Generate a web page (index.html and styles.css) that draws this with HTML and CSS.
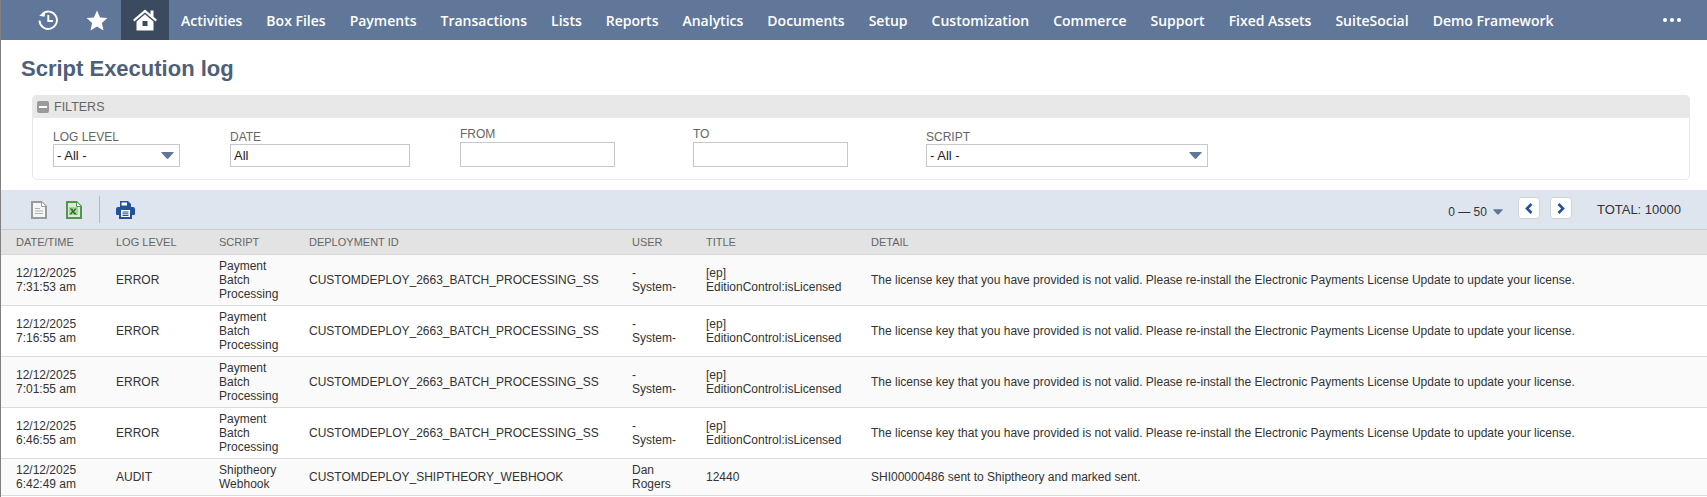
FILE: index.html
```html
<!DOCTYPE html>
<html lang="en">
<head>
<meta charset="utf-8">
<title>Script Execution log</title>
<link rel="stylesheet" href="styles.css">
</head>
<body>
<div class="page">
  <nav class="nav">
    <a class="nav-icon nav-first" aria-label="Recent">
      <svg width="20" height="20" viewBox="0 0 20 20"><path d="M4.2 3.9A8.7 8.7 0 1 1 1.5 10.5" fill="none" stroke="#fff" stroke-width="1.9"/><path d="M7 0.3V6.4H1.6Z" fill="#fff" transform="rotate(12 5 4)"/><path d="M10.3 5V11H15" fill="none" stroke="#fff" stroke-width="1.9"/></svg>
    </a>
    <a class="nav-icon nav-star" aria-label="Favorites">
      <svg width="22" height="21" viewBox="0 0 22 21"><path d="M11 0.5L14.1 7.4L21.4 8.1L15.9 13L17.5 20.4L11 16.6L4.5 20.4L6.1 13L0.6 8.1L7.9 7.4Z" fill="#fff"/></svg>
    </a>
    <a class="nav-icon nav-home" aria-label="Home">
      <svg width="24" height="22" viewBox="0 0 24 22"><path d="M12 0.5L17.5 5.2V1.5H20.5V7.8L24 10.8L22.6 12.4L12 3.4L1.4 12.4L0 10.8Z" fill="#fff"/><path fill-rule="evenodd" d="M12 5.2L20.5 12.4V21.5H3.5V12.4ZM9.5 12V17H14.5V12Z" fill="#fff"/></svg>
    </a>
    <a class="nav-link">Activities</a>
    <a class="nav-link">Box Files</a>
    <a class="nav-link">Payments</a>
    <a class="nav-link">Transactions</a>
    <a class="nav-link">Lists</a>
    <a class="nav-link">Reports</a>
    <a class="nav-link">Analytics</a>
    <a class="nav-link">Documents</a>
    <a class="nav-link">Setup</a>
    <a class="nav-link">Customization</a>
    <a class="nav-link">Commerce</a>
    <a class="nav-link">Support</a>
    <a class="nav-link">Fixed Assets</a>
    <a class="nav-link">SuiteSocial</a>
    <a class="nav-link">Demo Framework</a>
    <span class="nav-more" aria-label="More"><i></i><i></i><i></i></span>
  </nav>

  <h1 class="title">Script Execution log</h1>

  <section class="filters">
    <div class="filters-head">
      <span class="minus"></span>
      <span class="filters-name">FILTERS</span>
    </div>
    <div class="filters-body">
      <div class="field">
        <label class="field-label">LOG LEVEL</label>
        <div class="select select-level"><span>- All -</span>
          <svg class="caret" width="13" height="7" viewBox="0 0 13 7"><path d="M0.8 0H12.2Q13 0 12.6 0.8L7.3 6.6Q6.5 7.2 5.7 6.6L0.4 0.8Q0 0 0.8 0Z" fill="#607799"/></svg>
        </div>
      </div>
      <div class="field">
        <label class="field-label">DATE</label>
        <input class="input input-date" value="All">
      </div>
      <div class="field">
        <label class="field-label">FROM</label>
        <input class="input input-range">
      </div>
      <div class="field">
        <label class="field-label">TO</label>
        <input class="input input-range">
      </div>
      <div class="field">
        <label class="field-label">SCRIPT</label>
        <div class="select select-script"><span>- All -</span>
          <svg class="caret" width="13" height="7" viewBox="0 0 13 7"><path d="M0.8 0H12.2Q13 0 12.6 0.8L7.3 6.6Q6.5 7.2 5.7 6.6L0.4 0.8Q0 0 0.8 0Z" fill="#607799"/></svg>
        </div>
      </div>
    </div>
  </section>

  <div class="toolbar">
    <svg class="tool tool-doc" width="16" height="18" viewBox="0 0 16 18"><path d="M1 1H10.5L15 5.5V17H1Z" fill="#f4f5f7" stroke="#9a9a9a" stroke-width="2"/><path d="M10.5 1V5.5H15" fill="#fff" stroke="#9a9a9a"/><path d="M4 7.5H9M4 10H12M4 12.5H12" stroke="#b0b0b0"/></svg>
    <svg class="tool tool-xls" width="16" height="18" viewBox="0 0 16 18"><path d="M1 1H10.5L15 5.5V17H1Z" fill="#dcebd6" stroke="#4f9650" stroke-width="2"/><path d="M10.5 1V5.5H15" fill="#fff" stroke="#4f9650"/><path d="M3 6H12V14H3Z" fill="#a9d29f"/><path d="M4 6.5L11 13.5H8.6L6.8 11.4L5.2 13.5H3.6L6 10.2L3.8 7.5H6.2L7.6 9.2L9 7.5H10.6L8.4 10.4" fill="#256b1f"/></svg>
    <span class="tool-sep"></span>
    <svg class="tool tool-print" width="19" height="18" viewBox="0 0 19 18"><path d="M4 0H12L15 3V6H4Z" fill="#23529b"/><path d="M5.5 1.5H11V4.5H5.5Z" fill="#fff"/><path d="M2 6H17Q19 6 19 8V13Q19 14 18 14H16V18H3V14H1Q0 14 0 13V8Q0 6 2 6Z" fill="#23529b"/><path d="M5 9H14V16H5Z" fill="#fff"/><path d="M6.5 11H12.5M6.5 12.8H12.5M6.5 14.5H12.5" stroke="#23529b"/></svg>
    <div class="pager">
      <span class="range">0 — 50</span>
      <svg class="range-caret" width="10" height="6" viewBox="0 0 13 7"><path d="M0.8 0H12.2Q13 0 12.6 0.8L7.3 6.6Q6.5 7.2 5.7 6.6L0.4 0.8Q0 0 0.8 0Z" fill="#607799"/></svg>
      <button class="page-btn page-prev" aria-label="Previous"><svg width="8" height="11" viewBox="0 0 8 11"><path d="M6.5 1L2 5.5L6.5 10" fill="none" stroke="#23529b" stroke-width="2.6"/></svg></button>
      <button class="page-btn page-next" aria-label="Next"><svg width="8" height="11" viewBox="0 0 8 11"><path d="M1.5 1L6 5.5L1.5 10" fill="none" stroke="#23529b" stroke-width="2.6"/></svg></button>
      <span class="total">TOTAL: 10000</span>
    </div>
  </div>

  <table class="log">
    <colgroup>
      <col class="c-date"><col class="c-level"><col class="c-script"><col class="c-dep"><col class="c-user"><col class="c-title"><col class="c-detail">
    </colgroup>
    <thead>
      <tr><th>DATE/TIME</th><th>LOG LEVEL</th><th>SCRIPT</th><th>DEPLOYMENT ID</th><th>USER</th><th>TITLE</th><th>DETAIL</th></tr>
    </thead>
    <tbody>
      <tr>
        <td>12/12/2025 7:31:53 am</td><td>ERROR</td><td>Payment Batch Processing</td><td>CUSTOMDEPLOY_2663_BATCH_PROCESSING_SS</td><td>-System-</td><td>[ep] EditionControl:isLicensed</td>
        <td>The license key that you have provided is not valid. Please re-install the Electronic Payments License Update to update your license.</td>
      </tr>
      <tr>
        <td>12/12/2025 7:16:55 am</td><td>ERROR</td><td>Payment Batch Processing</td><td>CUSTOMDEPLOY_2663_BATCH_PROCESSING_SS</td><td>-System-</td><td>[ep] EditionControl:isLicensed</td>
        <td>The license key that you have provided is not valid. Please re-install the Electronic Payments License Update to update your license.</td>
      </tr>
      <tr>
        <td>12/12/2025 7:01:55 am</td><td>ERROR</td><td>Payment Batch Processing</td><td>CUSTOMDEPLOY_2663_BATCH_PROCESSING_SS</td><td>-System-</td><td>[ep] EditionControl:isLicensed</td>
        <td>The license key that you have provided is not valid. Please re-install the Electronic Payments License Update to update your license.</td>
      </tr>
      <tr>
        <td>12/12/2025 6:46:55 am</td><td>ERROR</td><td>Payment Batch Processing</td><td>CUSTOMDEPLOY_2663_BATCH_PROCESSING_SS</td><td>-System-</td><td>[ep] EditionControl:isLicensed</td>
        <td>The license key that you have provided is not valid. Please re-install the Electronic Payments License Update to update your license.</td>
      </tr>
      <tr>
        <td>12/12/2025 6:42:49 am</td><td>AUDIT</td><td>Shiptheory Webhook</td><td>CUSTOMDEPLOY_SHIPTHEORY_WEBHOOK</td><td>Dan Rogers</td><td>12440</td>
        <td>SHI00000486 sent to Shiptheory and marked sent.</td>
      </tr>
    </tbody>
  </table>
</div>
</body>
</html>
```
FILE: styles.css
```css
* { box-sizing: border-box; }
html, body { margin: 0; padding: 0; background: #fff; }
body { font-family: "Liberation Sans", Arial, sans-serif; font-size: 12px; color: #333; overflow: hidden; }
.page { width: 1707px; height: 497px; border-left: 1px solid #808080; overflow: hidden; }

.nav { display: flex; align-items: stretch; height: 40px; background: #607799; font-family: "Open Sans", sans-serif; font-size: 14px; font-weight: 600; color: #fff; }
.nav-icon { display: flex; align-items: center; justify-content: center; }
.nav-first { margin-left: 37px; width: 20px; }
.nav-star { margin-left: 28px; width: 22px; }
.nav-home { margin-left: 13px; width: 48px; background: #3b4a5f; }
.nav-link { display: flex; align-items: center; padding: 0 12px; white-space: nowrap; }
.nav-more { display: flex; align-items: center; gap: 3px; margin-left: auto; margin-right: 26px; }
.nav-more i { display: block; width: 4px; height: 4px; border-radius: 50%; background: #fff; }

.title { margin: 0; padding: 16px 0 0 20px; height: 55px; font-size: 22px; line-height: 26px; font-weight: 700; color: #4d5f79; }

.filters { margin: 0 17px 0 31px; height: 85px; border: 1px solid #e8e8e8; border-radius: 5px; }
.filters-head { display: flex; align-items: center; height: 23px; margin: -1px -1px 0; padding-left: 5px; background: #e8e8e8; border-radius: 5px 5px 0 0; }
.minus { position: relative; display: block; width: 12px; height: 12px; border-radius: 2px; background: #9a9a9a; }
.minus::after { content: ""; position: absolute; left: 2px; right: 2px; top: 5px; height: 2px; background: #fff; }
.filters-name { margin-left: 5px; font-size: 12.5px; color: #666; }

.filters-body { display: grid; grid-template-columns: 177px 230px 233px 233px 283px; align-items: end; height: 49px; padding-left: 20px; }
.field { display: flex; flex-direction: column; }
.field-label { font-size: 12px; line-height: 14px; color: #666; }
.input, .select { height: 23px; border: 1px solid #c8c8c8; background: #fff; font-family: inherit; font-size: 13px; color: #222; padding: 0 3px; }
.input-date { width: 180px; }
.input-range { width: 155px; height: 25px; margin-top: 1px; }
.select { display: flex; align-items: center; justify-content: space-between; padding-right: 5px; }
.select-level { width: 127px; }
.select-script { width: 282px; }

.toolbar { display: flex; align-items: center; height: 40px; margin-top: 10px; background: #dfe5ee; border-bottom: 1px solid #ccc; }
.tool { display: block; }
.tool-doc { margin-left: 30px; }
.tool-xls { margin-left: 19px; }
.tool-sep { width: 1px; height: 27px; margin-left: 17px; background: #b5b9bf; }
.tool-print { margin-left: 16px; }
.pager { display: flex; align-items: center; margin-left: auto; margin-right: 26px; }
.range { font-size: 12px; color: #333; margin-top: 5px; }
.range-caret { margin-left: 6px; margin-top: 5px; }
.page-btn { display: flex; align-items: center; justify-content: center; width: 22px; height: 22px; padding: 0; margin: 0 0 3px 15px; background: #fff; border: 1px solid #d0d4da; border-radius: 3px; }
.page-next { margin-left: 10px; }
.total { margin-left: 25px; font-size: 13px; color: #333; }

.log { width: 1706px; border-collapse: collapse; table-layout: fixed; }
.c-date { width: 100px; }
.c-level { width: 103px; }
.c-script { width: 90px; }
.c-dep { width: 323px; }
.c-user { width: 74px; }
.c-title { width: 165px; }
.c-detail { width: auto; }
.log th { height: 24px; padding: 0 15px; background: #e3e3e3; border-bottom: 1px solid #d8d8d8; font-size: 11px; font-weight: 400; color: #666; text-align: left; }
.log td { padding: 4px 15px; border-bottom: 1px solid #dcdcdc; font-size: 12px; line-height: 14px; color: #333; background: #fff; vertical-align: middle; }
.log td:last-child, .log th:last-child { padding-right: 0; }
.log tbody tr:nth-child(odd) td { background: #fafafa; }
```
